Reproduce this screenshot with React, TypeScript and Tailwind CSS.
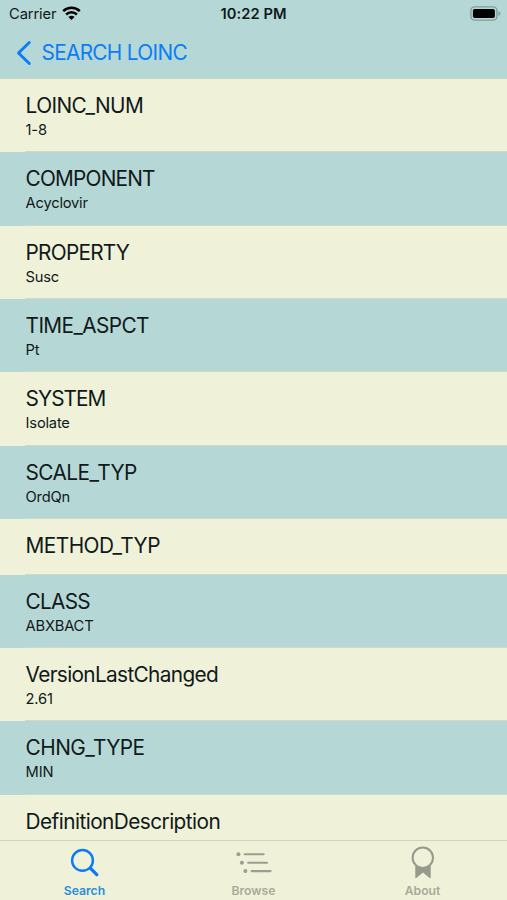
import clsx from 'clsx';

const rows = [
  { title: 'LOINC_NUM', detail: '1-8', tracking: 'tracking-[-0.58px]' },
  { title: 'COMPONENT', detail: 'Acyclovir', tracking: 'tracking-[-0.8px]' },
  { title: 'PROPERTY', detail: 'Susc', tracking: 'tracking-[-0.76px]' },
  { title: 'TIME_ASPCT', detail: 'Pt', tracking: 'tracking-[-0.62px]' },
  { title: 'SYSTEM', detail: 'Isolate', tracking: 'tracking-[-0.95px]' },
  { title: 'SCALE_TYP', detail: 'OrdQn', tracking: 'tracking-[-0.58px]' },
  { title: 'METHOD_TYP', tracking: 'tracking-[-0.55px]' },
  { title: 'CLASS', detail: 'ABXBACT', tracking: 'tracking-[-0.75px]' },
  { title: 'VersionLastChanged', detail: '2.61', tracking: 'tracking-[-0.66px]' },
  { title: 'CHNG_TYPE', detail: 'MIN', tracking: 'tracking-[-0.55px]' },
  { title: 'DefinitionDescription', detail: '', tracking: 'tracking-[-0.56px]' },
];

const StatusBar = () => (
  <div className="grid h-[27px] shrink-0 grid-cols-3 items-center text-[14.7px] leading-[18px] text-[#10191a]">
    <div className="flex items-center gap-[6px] pl-[9px]">
      <span className="tracking-[-0.1px]">Carrier</span>
      <svg width="19" height="15" viewBox="0 0 19 15" fill="none" stroke="black" strokeWidth="2.5">
        <path d="M1.2 5.2C5.9 .7 13.1 .7 17.8 5.2" />
        <path d="M4.1 8.5C7.1 5.6 11.9 5.6 14.9 8.5" />
        <path d="M6.4 10.9C8.2 9.3 10.8 9.3 12.6 10.9L9.5 14Z" fill="black" stroke="none" />
      </svg>
    </div>
    <span className="text-center font-semibold tracking-[0.08px]">10:22 PM</span>
    <svg className="mr-[6px] justify-self-end" width="31" height="15" viewBox="0 0 31 15">
      <rect x=".9" y=".9" width="26" height="13.2" rx="3.6" fill="none" stroke="#839c99" strokeWidth="1.4" />
      <rect x="2.9" y="2.9" width="22" height="9.2" rx="1.8" fill="black" />
      <path d="M28.4 5.2C31 6 31 9 28.4 9.8Z" fill="#839c99" />
    </svg>
  </div>
);

type RowProps = { title: string; detail?: string; tracking: string; tinted: boolean };

const Row = ({ title, detail, tracking, tinted }: RowProps) => (
  <li
    className={clsx(
      'relative shrink-0 pl-[25.6px] pt-[14px]',
      detail === undefined ? 'h-[55.5px]' : 'h-[73.35px]',
      tinted ? 'bg-[#b5d8d6]' : 'bg-[#eff2d8]',
    )}
  >
    <div className={clsx('text-[20.8px] leading-[25px]', tracking)}>{title}</div>
    {detail && <div className="text-[14.7px] leading-[24px] tracking-[-0.2px]">{detail}</div>}
    <div className="absolute bottom-0 left-[25px] right-0 h-px bg-[#cfdac6]"></div>
  </li>
);

const SearchIcon = () => (
  <svg width="36" height="34" viewBox="0 0 36 34" fill="none" stroke="#0b7bf5" strokeLinecap="round">
    <circle cx="15.5" cy="14.4" r="10.4" strokeWidth="2.4" />
    <path d="M23.3 22.2L29.8 28.7" strokeWidth="3.3" />
  </svg>
);

const BrowseIcon = () => (
  <svg width="36" height="34" viewBox="0 0 36 34" fill="#9b9e90" stroke="#9b9e90" strokeLinecap="round" strokeWidth="2.1">
    <circle cx="2.4" cy="8.3" r="2" stroke="none" />
    <circle cx="5.9" cy="16.7" r="2" stroke="none" />
    <circle cx="9.4" cy="25.1" r="2" stroke="none" />
    <path d="M8.7 8.3H27.6M12.2 16.7H31.1M15.7 25.1H34.6" />
  </svg>
);

const AboutIcon = () => (
  <svg width="36" height="34" viewBox="0 0 36 34">
    <path d="M10.3 19H25.7V31.2Q25.7 33 24.4 31.8L18 26.6L11.6 31.8Q10.3 33 10.3 31.2Z" fill="#96998c" />
    <circle cx="17.8" cy="11.7" r="10.2" fill="#eff2d8" stroke="#96998c" strokeWidth="2" />
  </svg>
);

const tabs = [
  { label: 'Search', icon: SearchIcon, active: true },
  { label: 'Browse', icon: BrowseIcon, active: false },
  { label: 'About', icon: AboutIcon, active: false },
];

const App = () => {
  return (
    <div className="flex h-[900px] w-[507px] flex-col overflow-hidden bg-[#b5d8d6] font-['Inter',sans-serif] text-[#11191a]">
      <StatusBar />
      <header className="flex h-[52px] shrink-0 items-center border-b border-[#c6d5c7] pl-4">
        <button className="flex items-center gap-[8.5px] text-[#0a7cf8]">
          <svg width="17" height="26" viewBox="0 0 17 26" fill="none" stroke="currentColor" strokeWidth="2.9" strokeLinecap="round" strokeLinejoin="round">
            <path d="M13.3 2.5L2.5 13L13.3 23.5" />
          </svg>
          <span className="text-[20.8px] leading-[25px] tracking-[-0.68px]">SEARCH LOINC</span>
        </button>
      </header>
      <ul className="flex min-h-0 flex-1 flex-col overflow-hidden">
        {rows.map((row, i) => (
          <Row key={row.title} {...row} tinted={i % 2 === 1} />
        ))}
      </ul>
      <nav className="grid h-[60px] shrink-0 grid-cols-3 border-t border-[#d1d5bd] bg-[#eff2d8]">
        {tabs.map(({ label, icon: Icon, active }) => (
          <button
            key={label}
            className={clsx(
              'flex flex-col items-center pt-[5px] text-[12.2px] font-semibold leading-[16px]',
              active ? 'text-[#298bdf]' : 'text-[#a8ab99]',
            )}
          >
            <Icon />
            <span className="mt-[3px]">{label}</span>
          </button>
        ))}
      </nav>
    </div>
  );
};

export default App;
